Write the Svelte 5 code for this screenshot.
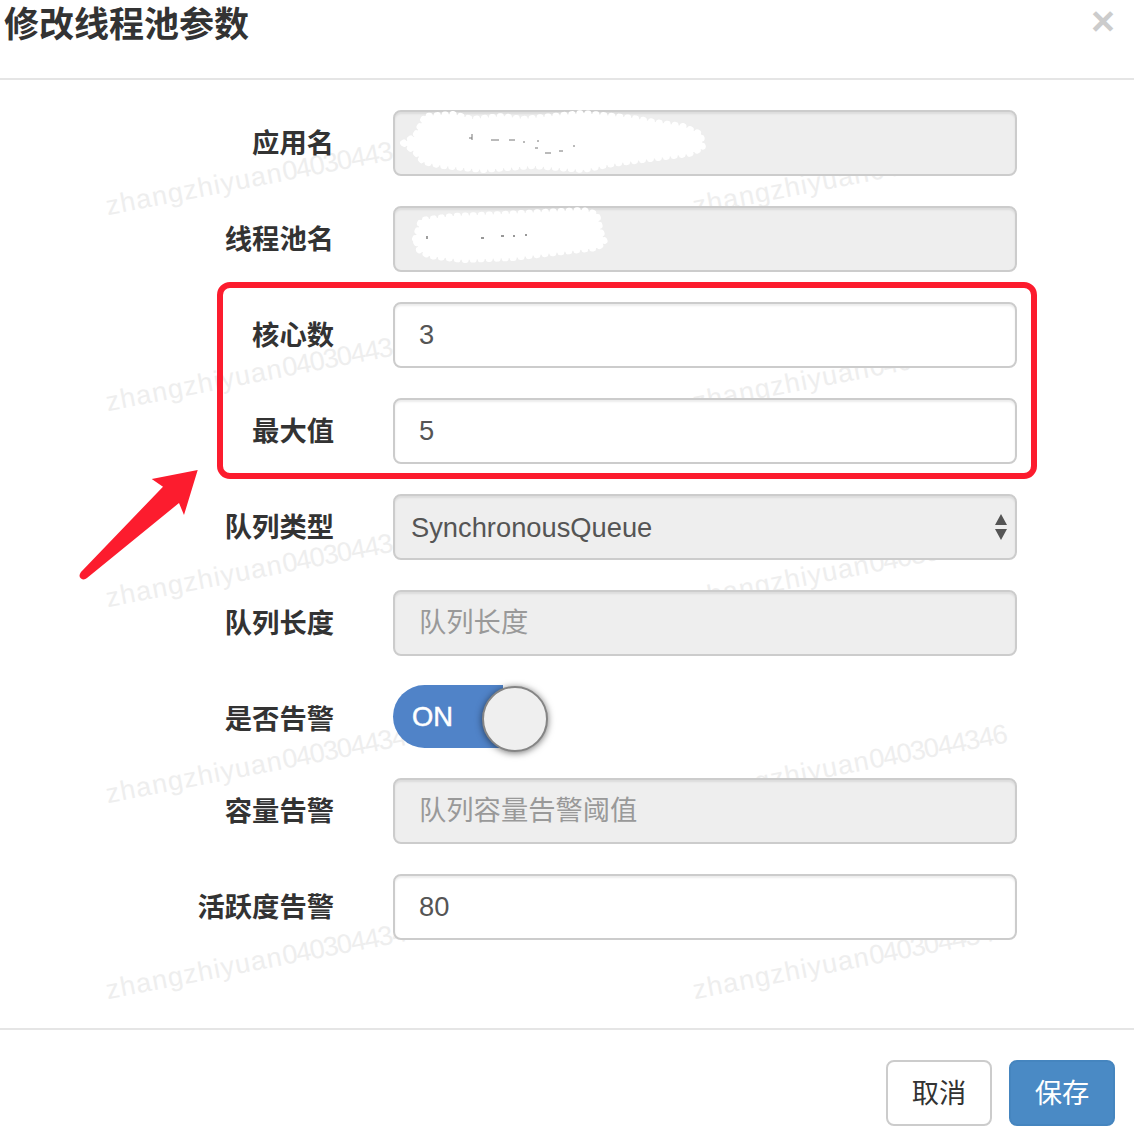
<script>
  const fields = [
    { label: "应用名", disabled: true, blot: 1 },
    { label: "线程池名", disabled: true, blot: 2 },
    { label: "核心数", value: "3" },
    { label: "最大值", value: "5" },
    { label: "队列类型", select: true },
    { label: "队列长度", disabled: true, placeholder: "队列长度" },
    { label: "是否告警", toggle: true },
    { label: "容量告警", disabled: true, placeholder: "队列容量告警阈值" },
    { label: "活跃度告警", value: "80" }
  ];

  // watermark tiles repeat every 587 x 196
  const marks = [];
  for (let r = 0; r < 5; r++) {
    for (let c = 0; c < 2; c++) {
      marks.push({ x: 109 + c * 587, y: 190 + r * 196 });
    }
  }
</script>

<div class="modal">
  <div class="marks">
    {#each marks as m}
      <span class="mark" style="left:{m.x}px;top:{m.y}px">zhangzhiyuan<span class="digits">0403044346</span></span>
    {/each}
  </div>

  <header class="head">
    <h4>修改线程池参数</h4>
    <span class="close">×</span>
  </header>

  <form class="body">
    {#each fields as f}
      <div class="row" class:short={f.toggle}>
        <label for={f.label}>{f.label}</label>
        <div class="ctl">
          {#if f.select}
            <div class="select">
              <select id={f.label} disabled>
                <option>SynchronousQueue</option>
              </select>
              <svg class="updown" width="14" height="28" viewBox="0 0 14 28">
                <path d="M7 1 13 12H1Z M1 16H13L7 27Z" fill="#555" />
              </svg>
            </div>
          {:else if f.toggle}
            <div class="switch" id={f.label}>
              <span class="on">ON</span>
              <span class="knob"></span>
            </div>
          {:else}
            <input id={f.label} value={f.value || ""} placeholder={f.placeholder || ""} disabled={f.disabled} />
            {#if f.blot === 1}
              <svg class="blot" width="320" height="66" viewBox="0 0 320 66">
                <path class="smear" d="M10 33 22 26 32 6 60 4 80 9 110 6 130 9 190 3 240 8 262 12 290 16 308 24 310 38 296 44 250 50 220 54 190 60 140 56 90 60 50 56 30 52 22 42Z" />
                <path d="M76 28h3M79 24v6M98 30h8M116 30h6M130 32h2M144 31h2M142 38h3M152 43h6M166 41h4M180 36h2" stroke="#777" stroke-width="1" fill="none" />
              </svg>
            {:else if f.blot === 2}
              <svg class="blot" width="320" height="66" viewBox="0 0 320 66">
                <path class="smear" d="M22 33 28 14 60 10 110 8 150 6 190 4 204 8 208 26 212 36 204 42 170 46 120 52 70 54 36 50 26 44Z" />
                <path d="M34 30v3M88 32h3M108 30h3M120 30h2M132 29h2" stroke="#777" stroke-width="1.4" fill="none" />
              </svg>
            {/if}
          {/if}
        </div>
      </div>
    {/each}
  </form>

  <footer class="foot">
    <button type="button" class="btn">取消</button>
    <button type="button" class="btn primary">保存</button>
  </footer>

  <!-- annotation drawn over the screenshot -->
  <div class="redbox"></div>
  <svg class="arrow" width="130" height="120" viewBox="75 465 130 120">
    <path d="M197.7 470 151.7 479 163 486.7 81 572Q78 576 81 578.5 84 580.5 87 578L179 503 184 515Z" fill="#fc1c2e" />
  </svg>
</div>

<style>
  :global(body) {
    background: #fff;
  }

  .modal {
    position: relative;
    width: 1134px;
    height: 1135px;
    overflow: hidden;
    background: #fff;
    font-family: "Liberation Sans", "Noto Sans CJK SC", sans-serif;
    color: #333;
  }

  .marks {
    position: absolute;
    inset: 0;
  }

  .mark {
    position: absolute;
    font-size: 27px;
    letter-spacing: 1.1px;
    line-height: 32px;
    white-space: nowrap;
    color: #eee;
    transform: rotate(-11deg);
    transform-origin: left bottom;
  }

  .digits {
    letter-spacing: -1.1px;
  }

  .head {
    position: relative;
    display: flex;
    justify-content: space-between;
    height: 78px;
    border-bottom: 2px solid #e5e5e5;
    padding: 0 19px 0 4px;
  }

  .head h4 {
    margin: 0;
    font-size: 35px;
    line-height: 50px;
    font-weight: 700;
    color: #333;
  }

  .close {
    font-size: 41px;
    line-height: 42px;
    font-weight: 700;
    color: #ccc;
  }

  .body {
    position: relative;
    padding-top: 30px;
    height: 948px;
    box-sizing: border-box;
    margin: 0;
  }

  .row {
    display: flex;
    align-items: center;
    height: 66px;
    margin-bottom: 30px;
  }

  .row.short {
    height: 62px;
  }

  .row label {
    width: 334px;
    margin-top: -4px;
    text-align: right;
    font-size: 27.3px;
    font-weight: 700;
    color: #333;
  }

  .row.short label {
    margin-top: 0;
  }

  .ctl {
    position: relative;
    width: 624px;
    margin-left: 59px;
  }

  input,
  select {
    display: block;
    width: 100%;
    height: 66px;
    box-sizing: border-box;
    padding: 0 24px;
    border: 2px solid #ccc;
    border-radius: 8px;
    background: #fff;
    box-shadow: inset 0 2px 2px rgba(0, 0, 0, 0.075);
    font: inherit;
    font-size: 27.3px;
    color: #555;
    opacity: 1;
  }

  input:disabled,
  select:disabled {
    background: #eee;
    color: #555;
    opacity: 1;
  }

  input::placeholder {
    color: #999;
    opacity: 1;
  }

  select {
    appearance: none;
    padding: 0 16px;
  }

  .select {
    position: relative;
  }

  .updown {
    position: absolute;
    right: 9px;
    top: 19px;
  }

  .blot {
    position: absolute;
    left: 0;
    top: 0;
  }

  .smear {
    fill: #fff;
    stroke: #fff;
    stroke-width: 6;
    stroke-linecap: round;
    stroke-dasharray: 1 7;
  }

  .switch {
    position: relative;
    width: 156px;
    height: 63px;
    margin-top: -2px;
  }

  .on {
    display: block;
    width: 110px;
    height: 63px;
    padding-left: 19px;
    box-sizing: border-box;
    border-radius: 32px 0 0 32px;
    background: #5083c8;
    color: #fff;
    font-size: 27.3px;
    line-height: 63px;
    -webkit-text-stroke: 0.5px #fff;
  }

  .knob {
    position: absolute;
    left: 89px;
    top: 1px;
    width: 66px;
    height: 66px;
    box-sizing: border-box;
    border-radius: 50%;
    border: 2px solid #858585;
    background: #efefef;
    box-shadow: 0 1px 7px rgba(0, 0, 0, 0.55);
  }

  .foot {
    position: relative;
    display: flex;
    justify-content: flex-end;
    gap: 17px;
    padding: 30px 19px 0 0;
    border-top: 2px solid #e5e5e5;
  }

  .btn {
    width: 106px;
    height: 66px;
    box-sizing: border-box;
    border: 2px solid #ccc;
    border-radius: 8px;
    background: #fff;
    font: inherit;
    font-size: 27.3px;
    color: #333;
    padding: 0 0 4px;
  }

  .btn.primary {
    border-color: #4585bf;
    background: #4a8ac5;
    color: #fff;
  }

  .redbox {
    position: absolute;
    left: 217px;
    top: 282px;
    width: 820px;
    height: 197px;
    box-sizing: border-box;
    border: 6px solid #fc1c2e;
    border-radius: 13px;
  }

  .arrow {
    position: absolute;
    left: 75px;
    top: 465px;
  }
</style>
